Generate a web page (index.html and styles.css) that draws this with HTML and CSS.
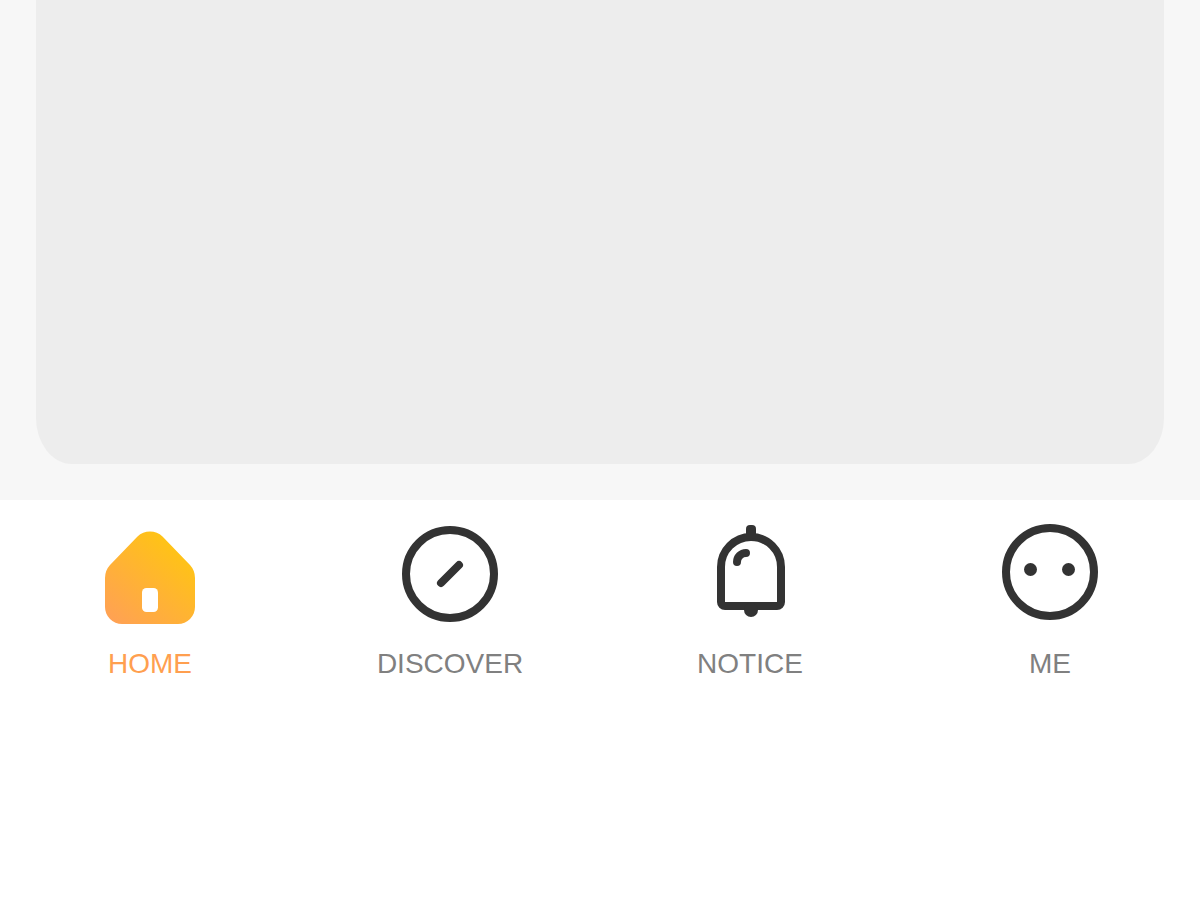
FILE: index.html
```
<!DOCTYPE html>
<html lang="en">
<head>
    <meta charset="UTF-8">
    <meta name="viewport" content="width=device-width, initial-scale=1.0">
    <title>Home</title>
    <link rel="stylesheet" href="styles.css">
</head>
<body>
    <main class="content">
        <div class="card"></div>
    </main>

    <nav class="tab-bar">
        <a class="tab active" href="#home" aria-current="page">
            <svg class="icon" viewBox="0 0 100 100" aria-hidden="true">
                <defs>
                    <linearGradient id="house" x1="0" y1="1" x2="0.75" y2="0.1">
                        <stop offset="0" stop-color="#ff9f58"/>
                        <stop offset="1" stop-color="#ffc414"/>
                    </linearGradient>
                </defs>
                <path fill="url(#house)" d="M37.500 12.500C44 5.700 56 5.700 62.500 12.500L90 41Q95 46.500 95 54V83A17 17 0 0 1 78 100H22A17 17 0 0 1 5 83V54Q5 46.500 10 41Z"/>
                <rect x="42" y="64" width="16" height="24" rx="4.500" fill="#fff"/>
            </svg>
            <span>HOME</span>
        </a>
        <a class="tab" href="#discover">
            <svg class="icon" viewBox="0 0 100 100" aria-hidden="true">
                <circle class="line" cx="50" cy="50" r="44"/>
                <path class="line" d="M41 59L59 41"/>
            </svg>
            <span>DISCOVER</span>
        </a>
        <a class="tab" href="#notice">
            <svg class="icon" viewBox="0 0 100 100" aria-hidden="true">
                <path class="line" d="M21 43a30 30 0 0 1 60 0V78A4 4 0 0 1 77 82H25A4 4 0 0 1 21 78Z"/>
                <rect class="solid" x="46" y="1" width="10" height="14" rx="4"/>
                <circle class="solid" cx="51" cy="86" r="7"/>
                <path class="line" d="M37 38A9 9 0 0 1 46 29"/>
            </svg>
            <span>NOTICE</span>
        </a>
        <a class="tab" href="#me">
            <svg class="icon" viewBox="0 0 100 100" aria-hidden="true">
                <circle class="line" cx="50" cy="48" r="44"/>
                <circle class="solid" cx="30.500" cy="45.500" r="6.500"/>
                <circle class="solid" cx="68.500" cy="45.500" r="6.500"/>
            </svg>
            <span>ME</span>
        </a>
    </nav>
</body>
</html>
```

FILE: styles.css
```
body {
    margin: 0;
    background-color: #fff;
    font-family: Helvetica, Arial, "Liberation Sans", sans-serif;
}

.content {
    padding: 0 36px 36px;
    background-color: #f7f7f7;
}

.card {
    min-height: 464px;
    background-color: #ededed;
    border-radius: 0 0 36px 36px / 0 0 46px 46px;
}

.tab-bar {
    display: grid;
    grid-template-columns: repeat(4, 1fr);
    padding: 24px 0;
    background-color: #fff;
}

.tab {
    display: flex;
    flex-direction: column;
    align-items: center;
    gap: 24px;
    color: #808080;
    font-size: 28px;
    line-height: 32px;
    text-decoration: none;
}

.tab.active {
    color: #ff9f4f;
}

.icon {
    width: 100px;
    height: 100px;
}

.line {
    fill: none;
    stroke: #333;
    stroke-width: 8;
    stroke-linecap: round;
}

.solid {
    fill: #333;
}
```
